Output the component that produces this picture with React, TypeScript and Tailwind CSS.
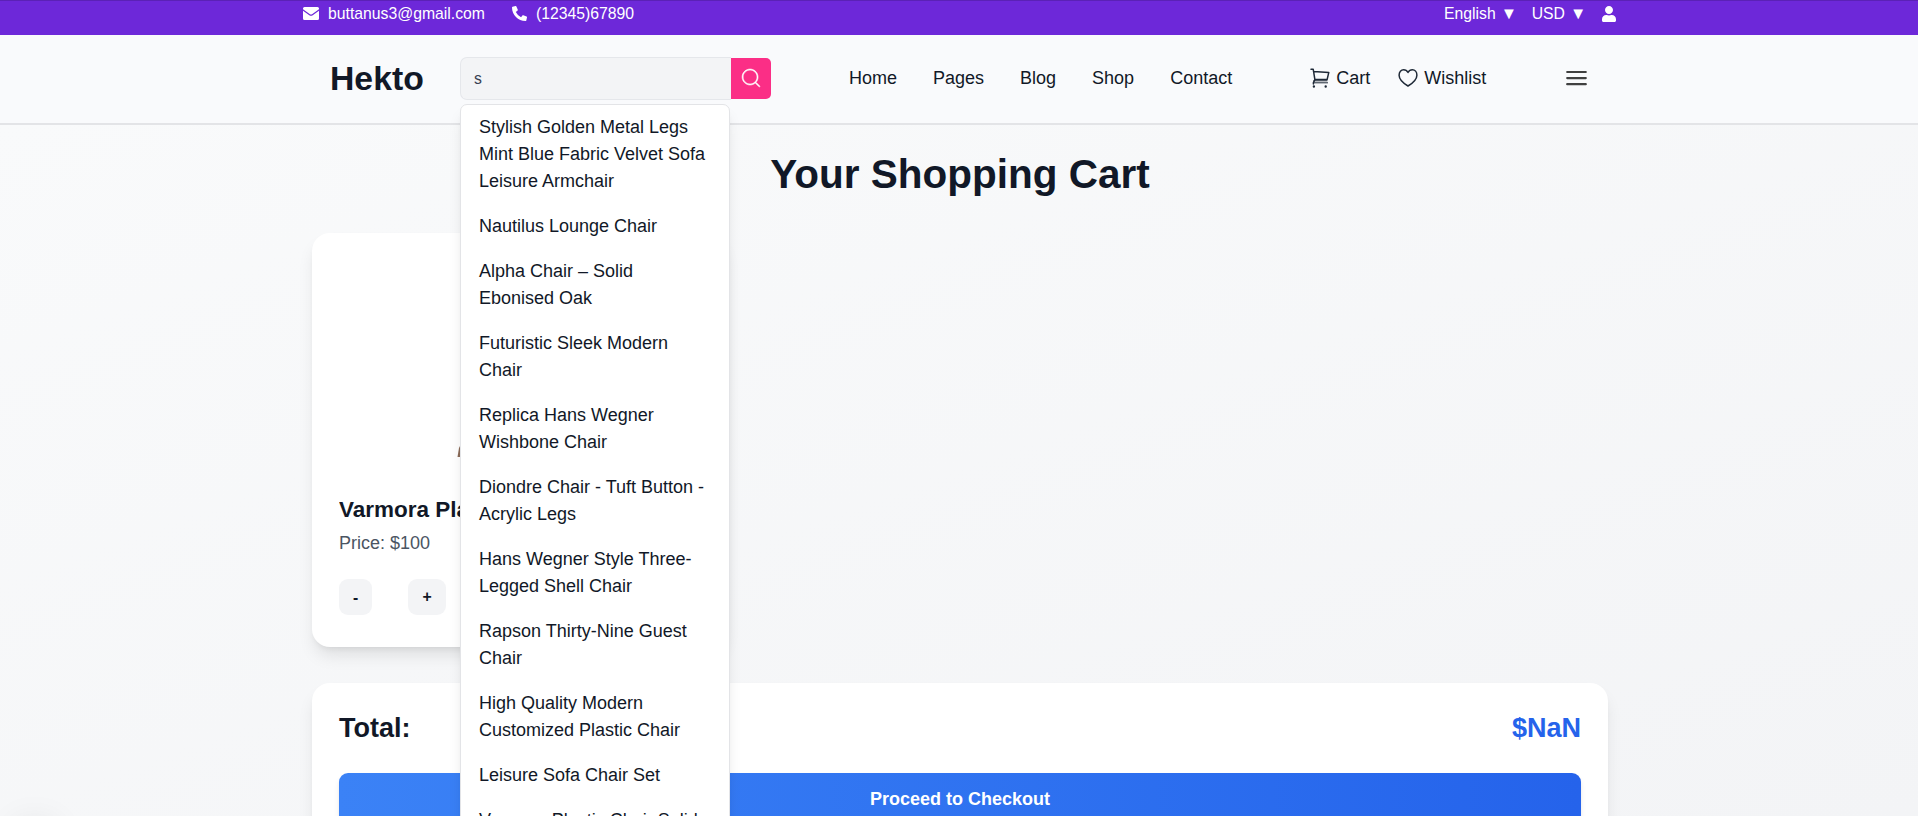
import { FaPhoneAlt, FaUser } from "react-icons/fa";
import { CiSearch } from "react-icons/ci";

const results = [
  "Stylish Golden Metal Legs Mint Blue Fabric Velvet Sofa Leisure Armchair",
  "Nautilus Lounge Chair",
  "Alpha Chair – Solid Ebonised Oak",
  "Futuristic Sleek Modern Chair",
  "Replica Hans Wegner Wishbone Chair",
  "Diondre Chair - Tuft Button - Acrylic Legs",
  "Hans Wegner Style Three-Legged Shell Chair",
  "Rapson Thirty-Nine Guest Chair",
  "High Quality Modern Customized Plastic Chair",
  "Leisure Sofa Chair Set",
  "Varmora Plastic Chair Solid",
];

const links = ["Home", "Pages", "Blog", "Shop", "Contact"];

function EnvelopeIcon() {
  return (
    <svg width="16" height="13" viewBox="0 0 16 13" fill="currentColor">
      <path d="M1.5 0h13A1.5 1.5 0 0 1 16 1.5v.7L9 7.2a1.8 1.8 0 0 1-2 0L0 2.2v-.7A1.5 1.5 0 0 1 1.5 0z" />
      <path d="M0 3.7 6.3 8.2a3 3 0 0 0 3.4 0L16 3.7V11.5A1.5 1.5 0 0 1 14.5 13h-13A1.5 1.5 0 0 1 0 11.5z" />
    </svg>
  );
}

function CartIcon() {
  return (
    <svg width="20" height="20" viewBox="0 0 20 20" fill="none" stroke="#1f2937" strokeWidth="1.5" strokeLinecap="round" strokeLinejoin="round">
      <path d="M1 1.2h2.2L4.9 11.6M3.5 3.5l15.3.9-1.7 7.2H4.9L3.4 14.6V16" />
      <path d="M3.4 14.8H17.6M3.8 12.8H17" strokeWidth="1" />
      <path d="M3.9 18.3v.4M15.7 18.3v.4" strokeWidth="2.3" />
    </svg>
  );
}

function HeartIcon() {
  return (
    <svg width="20" height="20" viewBox="0 0 20 20" fill="none" stroke="#1f2937" strokeWidth="1.5" strokeLinejoin="round">
      <path d="M10 18C6.2 15.7 1.1 12 1.1 7.2 1.1 4 3.1 1.8 5.6 1.8 7.5 1.8 9 2.7 10 4.5 11 2.7 12.5 1.8 14.4 1.8c2.5 0 4.5 2.2 4.5 5.4C18.9 12 13.8 15.7 10 18z" />
    </svg>
  );
}

function TopBar() {
  return (
    <div className="h-[35px] border-t border-[#5b21b6] bg-[#6d28d9] text-[15.75px] leading-[25px] text-white">
      <div className="flex justify-between pl-[303px] pr-[302px]">
        <div className="flex items-center">
          <EnvelopeIcon />
          <span className="ml-[9px]">buttanus3@gmail.com</span>
          <FaPhoneAlt className="ml-[27px] size-[15px]" />
          <span className="ml-[9px]">(12345)67890</span>
        </div>
        <div className="flex items-center">
          <span className="flex h-[25px]">
            English<span className="ml-[5px] w-[13px] whitespace-nowrap text-[16.5px]">▼</span>
          </span>
          <span className="ml-[18px] flex h-[25px]">
            USD<span className="ml-[5px] w-[13px] whitespace-nowrap text-[16.5px]">▼</span>
          </span>
          <FaUser className="ml-[19px] h-[16px] w-[14px]" />
        </div>
      </div>
    </div>
  );
}

function SearchBox() {
  return (
    <div className="relative ml-[36px] flex w-[311px] items-center">
      <div className="flex h-[43px] w-[271px] items-center rounded-l-[7px] border border-r-0 border-[#e5e7eb] bg-[#f3f4f6] pl-[13px] text-[15.75px] text-[#374151]">
        s
      </div>
      <button className="flex h-[41px] w-[40px] items-center justify-center rounded-r-[5px] bg-[#fb2e86] text-white">
        <CiSearch className="size-[24px]" strokeWidth={0.6} />
      </button>
      <ul className="absolute left-0 top-[47px] z-10 w-[270px] rounded-[7px] border border-[#e3e4e7] bg-white shadow-lg">
        {results.map((name) => (
          <li key={name} className="px-[18px] py-[9px] leading-[27px]">
            {name}
          </li>
        ))}
      </ul>
    </div>
  );
}

function Header() {
  return (
    <header className="flex h-[90px] items-center border-b-2 border-[#e3e4e7] bg-[#f9fafc] pb-[2px] pl-[330px]">
      <div className="w-[94px] whitespace-nowrap text-[33.75px] font-bold">Hekto</div>
      <SearchBox />
      <nav className="ml-[78px] flex gap-[36px]">
        {links.map((l) => (
          <a key={l}>{l}</a>
        ))}
      </nav>
      <a className="ml-[78px] flex items-center gap-[6px]">
        <CartIcon />
        Cart
      </a>
      <a className="ml-[28px] flex items-center gap-[6px]">
        <HeartIcon />
        Wishlist
      </a>
      <svg className="ml-[80px]" width="21" height="16" viewBox="0 0 21 16" stroke="#404040" strokeWidth="2.2" strokeLinecap="round">
        <path d="M1.2 2h18.6M1.2 8.1h18.6M1.2 14.2h18.6" />
      </svg>
    </header>
  );
}

function ProductCard() {
  return (
    <article className="h-[414px] w-[414px] rounded-[18px] bg-white px-[27px] pt-[27px] shadow-[0_11px_17px_-3px_rgba(0,0,0,0.1),0_4px_7px_-4px_rgba(0,0,0,0.1)]">
      <div className="flex h-[216px] items-end pb-[19px] pl-[118px]">
        <svg width="8" height="17" viewBox="0 0 8 17">
          <path d="M0.5 17 2 8 6 0h2v17z" fill="#8b6b58" />
        </svg>
      </div>
      <h2 className="mt-[18px] truncate text-[22.5px] font-semibold leading-[31.5px]">Varmora Plastic Chair Solid</h2>
      <p className="mt-[4px] text-[#4b5563]">Price: $100</p>
      <div className="mt-[22px] flex gap-[36px] text-[15.75px] font-semibold">
        <button className="h-[36px] w-[33px] rounded-[9px] bg-[#f3f4f6] pt-px">-</button>
        <button className="h-[36px] w-[38px] rounded-[9px] bg-[#f3f4f6]">+</button>
      </div>
    </article>
  );
}

export default function App() {
  return (
    <div className="h-[816px] overflow-hidden bg-[#f9fafc] font-['Liberation_Sans',Arial,sans-serif] text-[18px] leading-[27px] text-[#111827]">
      <TopBar />
      <Header />
      <main className="relative h-[691px] overflow-hidden bg-linear-to-br from-[#f9fafb] to-[#f3f4f6] pt-[27px]">
        <div className="mx-auto w-[1296px] translate-x-px">
          <h1 className="text-center text-[40.5px] font-bold leading-[45px]">Your Shopping Cart</h1>
          <div className="mt-[36px]">
            <ProductCard />
          </div>
          <section className="mt-[36px] h-[180px] rounded-[18px] bg-white px-[27px] pt-[27px] shadow-[0_11px_17px_-3px_rgba(0,0,0,0.1),0_4px_7px_-4px_rgba(0,0,0,0.1)]">
            <div className="flex justify-between text-[27px] font-bold leading-[36px]">
              <span>Total:</span>
              <span className="text-[#2563eb]">$NaN</span>
            </div>
            <button className="mt-[27px] h-[54px] w-full rounded-[9px] bg-linear-to-r from-[#3b82f6] to-[#2563eb] pb-[2px] font-semibold text-white shadow-md">
              Proceed to Checkout
            </button>
          </section>
        </div>
        <div className="absolute -bottom-[48px] left-[15px] size-[40px] rounded-full shadow-[0_0_36px_rgba(0,0,0,0.12)]" />
      </main>
    </div>
  );
}
